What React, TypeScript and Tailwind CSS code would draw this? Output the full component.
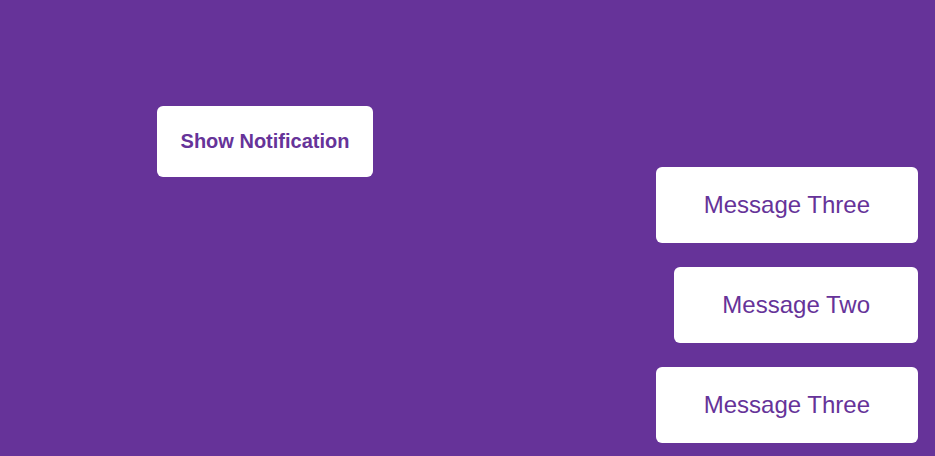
import React from "react";

const messages = ["Message Three", "Message Two", "Message Three"];

export default function App() {
	return (
		<div
			className="relative h-[456px] w-[935px] overflow-hidden bg-[#663399]"
			style={{ fontFamily: '"Liberation Sans", Arial, sans-serif' }}
		>
			<div className="pl-[157px] pt-[106px]">
				<button
					type="button"
					className="w-[216px] whitespace-nowrap rounded-[6px] bg-white py-6 text-center text-[20px] font-bold leading-[23px] text-[#663399]"
				>
					Show Notification
				</button>
			</div>

			{/* notification stack */}
			<div className="absolute bottom-[13px] right-[17px] flex flex-col items-end gap-6">
				{messages.map((m, i) => (
					<div
						key={i}
						className="rounded-[6px] bg-white px-12 py-6 text-[24px] leading-[28px] text-[#663399]"
					>
						{m}
					</div>
				))}
			</div>
		</div>
	);
}
